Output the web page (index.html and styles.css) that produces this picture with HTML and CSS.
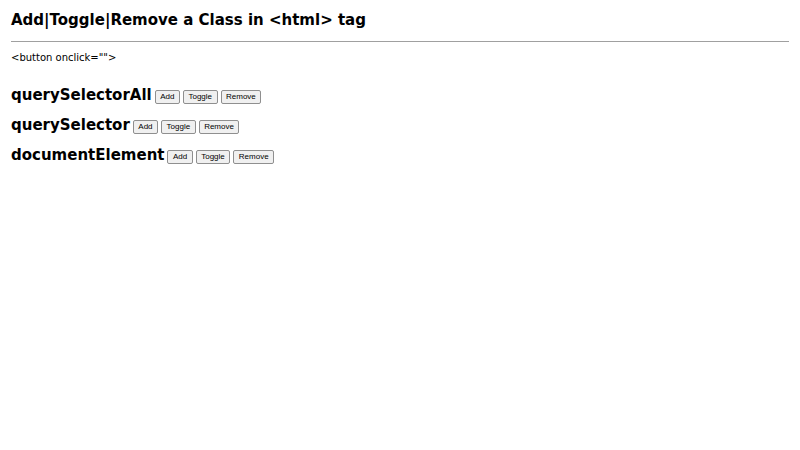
FILE: index.html
```html
<!DOCTYPE html>
<html>
<head>
<meta charset="utf-8">
<title>Class toggle</title>
<link rel="stylesheet" href="styles.css">
</head>
<body>
<h1 class="title">Add|Toggle|Remove a Class in &lt;html&gt; tag</h1>
<hr class="rule">
<p class="note">&lt;button onclick=""&gt;</p>
<div class="rows">
  <div class="row"><h2 class="label">querySelectorAll</h2><button class="btn">Add</button><button class="btn">Toggle</button><button class="btn">Remove</button></div>
  <div class="row"><h2 class="label">querySelector</h2><button class="btn">Add</button><button class="btn">Toggle</button><button class="btn">Remove</button></div>
  <div class="row"><h2 class="label">documentElement</h2><button class="btn">Add</button><button class="btn">Toggle</button><button class="btn">Remove</button></div>
</div>
</body>
</html>
```
FILE: styles.css
```css
body {
  margin: 0;
  padding: 0 11px;
  font-family: "DejaVu Sans", sans-serif;
  color: #000;
  background: #fff;
}
.title {
  font-size: 15px;
  font-weight: bold;
  margin: 0;
  padding-top: 11px;
  line-height: 18px;
}
.rule {
  margin: 12px 0 0;
  border: 0;
  border-top: 1px solid #a0a0a0;
  height: 0;
}
.note {
  font-size: 10px;
  margin: 10px 0 0;
  line-height: 12px;
}
.rows {
  display: flex;
  flex-direction: column;
  gap: 12px;
  margin-top: 22px;
}
.row {
  display: flex;
  align-items: center;
  gap: 3px;
  height: 18px;
}
.label {
  font-size: 15px;
  font-weight: bold;
  margin: 0;
  line-height: 18px;
}
.btn {
  font-family: "Liberation Sans", Arial, sans-serif;
  font-size: 8px;
  padding: 1px 4.5px;
  margin-top: 3px;
  border: 1px solid #8f8f8f;
  border-radius: 2px;
  background: #f0f0f0;
  color: #000;
  line-height: 10px;
}
```
